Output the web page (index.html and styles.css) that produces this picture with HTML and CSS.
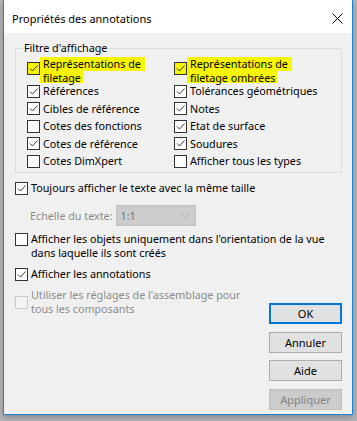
FILE: index.html
```html
<!DOCTYPE html>
<html lang="fr">
<head>
    <meta charset="UTF-8">
    <meta name="viewport" content="width=device-width, initial-scale=1.0">
    <title>Propriétés des annotations</title>
    <link rel="stylesheet" href="styles.css">
</head>
<body>

    <div class="window">
        <!-- Title bar -->
        <div class="titlebar">
            <span class="title">Propriétés des annotations</span>
            <svg class="close" width="11" height="11" viewBox="0 0 11 11">
                <path d="M0.5 0.5 L10.5 10.5 M10.5 0.5 L0.5 10.5" stroke="#000" stroke-width="1" fill="none"/>
            </svg>
        </div>

        <div class="content">
            <fieldset class="group">
                <legend>Filtre d'affichage</legend>
                <div class="filter-grid">
                    <label class="check marked">
                        <span class="box"><svg viewBox="0 0 11 11"><path d="M2 5.5 L4.5 8 L9.5 2.5"/></svg></span>
                        <span class="text"><span class="hl">Représentations de</span><span class="hl">filetage</span></span>
                    </label>
                    <label class="check marked">
                        <span class="box"><svg viewBox="0 0 11 11"><path d="M2 5.5 L4.5 8 L9.5 2.5"/></svg></span>
                        <span class="text"><span class="hl">Représentations de</span><span class="hl">filetage ombrées</span></span>
                    </label>

                    <label class="check">
                        <span class="box"><svg viewBox="0 0 11 11"><path d="M2 5.5 L4.5 8 L9.5 2.5"/></svg></span>
                        <span class="text">Références</span>
                    </label>
                    <label class="check">
                        <span class="box"><svg viewBox="0 0 11 11"><path d="M2 5.5 L4.5 8 L9.5 2.5"/></svg></span>
                        <span class="text">Tolérances géométriques</span>
                    </label>

                    <label class="check">
                        <span class="box"><svg viewBox="0 0 11 11"><path d="M2 5.5 L4.5 8 L9.5 2.5"/></svg></span>
                        <span class="text">Cibles de référence</span>
                    </label>
                    <label class="check">
                        <span class="box"><svg viewBox="0 0 11 11"><path d="M2 5.5 L4.5 8 L9.5 2.5"/></svg></span>
                        <span class="text">Notes</span>
                    </label>

                    <label class="check">
                        <span class="box"></span>
                        <span class="text">Cotes des fonctions</span>
                    </label>
                    <label class="check">
                        <span class="box"><svg viewBox="0 0 11 11"><path d="M2 5.5 L4.5 8 L9.5 2.5"/></svg></span>
                        <span class="text">Etat de surface</span>
                    </label>

                    <label class="check">
                        <span class="box"><svg viewBox="0 0 11 11"><path d="M2 5.5 L4.5 8 L9.5 2.5"/></svg></span>
                        <span class="text">Cotes de référence</span>
                    </label>
                    <label class="check">
                        <span class="box"><svg viewBox="0 0 11 11"><path d="M2 5.5 L4.5 8 L9.5 2.5"/></svg></span>
                        <span class="text">Soudures</span>
                    </label>

                    <label class="check">
                        <span class="box"></span>
                        <span class="text">Cotes DimXpert</span>
                    </label>
                    <label class="check">
                        <span class="box"></span>
                        <span class="text">Afficher tous les types</span>
                    </label>
                </div>
            </fieldset>

            <label class="check same-size">
                <span class="box"><svg viewBox="0 0 11 11"><path d="M2 5.5 L4.5 8 L9.5 2.5"/></svg></span>
                <span class="text">Toujours afficher le texte avec la même taille</span>
            </label>

            <div class="scale-row">
                <span class="scale-label">Echelle du texte:</span>
                <div class="combo">
                    <span>1:1</span>
                    <svg width="9" height="5" viewBox="0 0 9 5"><path d="M0.5 0.5 L4.5 4.5 L8.5 0.5" stroke="#a9a9a9" fill="none"/></svg>
                </div>
            </div>

            <label class="check top view-only">
                <span class="box"></span>
                <span class="text">Afficher les objets uniquement dans l'orientation de la vue<br>dans laquelle ils sont créés</span>
            </label>

            <label class="check show-notes">
                <span class="box"><svg viewBox="0 0 11 11"><path d="M2 5.5 L4.5 8 L9.5 2.5"/></svg></span>
                <span class="text">Afficher les annotations</span>
            </label>

            <div class="bottom-row">
                <label class="check disabled">
                    <span class="box"></span>
                    <span class="text">Utiliser les réglages de l'assemblage pour<br>tous les composants</span>
                </label>
                <div class="buttons">
                    <button class="btn default">OK</button>
                    <button class="btn">Annuler</button>
                    <button class="btn">Aide</button>
                    <button class="btn" disabled>Appliquer</button>
                </div>
            </div>
        </div>
    </div>

</body>
</html>
```

FILE: styles.css
```css
body {
    margin: 0;
    height: 421px;
    overflow: hidden;
    background-color: #b4b4b8;
    font-family: "Noto Sans", sans-serif;
    font-size: 10.75px;
    color: #000;
}

.window {
    margin-left: 3px;
    width: 348px;
    background-color: #f0f0f0;
    border: 1px solid #1883d7;
    border-top: none;
    box-shadow: 0 2px 6px rgba(0, 0, 0, 0.25);
}

/* Title bar */
.titlebar {
    height: 33px;
    box-sizing: border-box;
    padding: 3px 9px 0 8px;
    display: flex;
    align-items: center;
    background-color: #fff;
}

.title {
    font-size: 11px;
}

.close {
    margin-left: auto;
}

.content {
    padding: 8px 10px 4px 11px;
    display: flex;
    flex-direction: column;
}

/* Group box */
.group {
    margin: 0;
    padding: 2px 0 2px 11px;
    border: 1px solid #dcdcdc;
    min-width: 0;
}

.group legend {
    margin-left: -5px;
    padding: 0 2px;
    line-height: 14px;
}

.filter-grid {
    display: grid;
    grid-template-columns: 147px 1fr;
    grid-template-rows: 25.5px repeat(5, 17.5px);
    align-items: center;
}

/* Checkboxes */
.check {
    display: flex;
    align-items: center;
    gap: 3px;
    line-height: 14px;
    white-space: nowrap;
}

.check .box {
    flex: none;
    width: 13px;
    height: 13px;
    box-sizing: border-box;
    border: 1px solid #333;
    background-color: #fff;
    display: flex;
    align-items: center;
    justify-content: center;
}

.check .box svg {
    width: 11px;
    height: 11px;
    fill: none;
    stroke: #333;
    stroke-width: 1;
}

.check.top {
    align-items: flex-start;
}

.check.top .box {
    margin-top: 1px;
}

.marked {
    align-self: start;
    align-items: flex-start;
}

.marked .box {
    margin-top: 5px;
    background-color: #f7f500;
}

.marked .hl {
    display: block;
    width: fit-content;
    height: 14px;
    margin-left: -3px;
    padding: 0 4px 0 3px;
    background-color: #f7f500;
}

.marked .hl + .hl {
    height: 12px;
    padding-right: 2px;
}

.check.disabled {
    color: #8b8b8b;
}

.check.disabled .box {
    border-color: #cbcbcb;
    background-color: #f3f3f3;
}

/* Options below the group */
.same-size {
    margin-top: 8px;
}

.scale-row {
    margin-top: 10px;
    padding-left: 15px;
    display: flex;
    align-items: center;
    gap: 3px;
}

.scale-label {
    color: #8b8b8b;
}

.combo {
    width: 80px;
    height: 21px;
    box-sizing: border-box;
    border: 1px solid #bfbfbf;
    background-color: #cccccc;
    display: flex;
    align-items: center;
    justify-content: space-between;
    padding: 0 6px 0 4px;
    color: #707070;
}

.view-only {
    margin-top: 6px;
}

.show-notes {
    margin-top: 7px;
}

.bottom-row {
    margin-top: 7px;
    display: flex;
    justify-content: space-between;
    align-items: flex-start;
}

.buttons {
    margin-top: 15px;
    display: flex;
    flex-direction: column;
    gap: 7.5px;
}

.btn {
    width: 73px;
    height: 21px;
    box-sizing: border-box;
    padding: 0;
    border: 1px solid #adadad;
    background-color: #e1e1e1;
    font-family: inherit;
    font-size: 11px;
    color: #000;
}

.btn.default {
    border: 2px solid #0078d7;
}

.btn:disabled {
    border-color: #bfbfbf;
    background-color: #cccccc;
    color: #838383;
}
```
